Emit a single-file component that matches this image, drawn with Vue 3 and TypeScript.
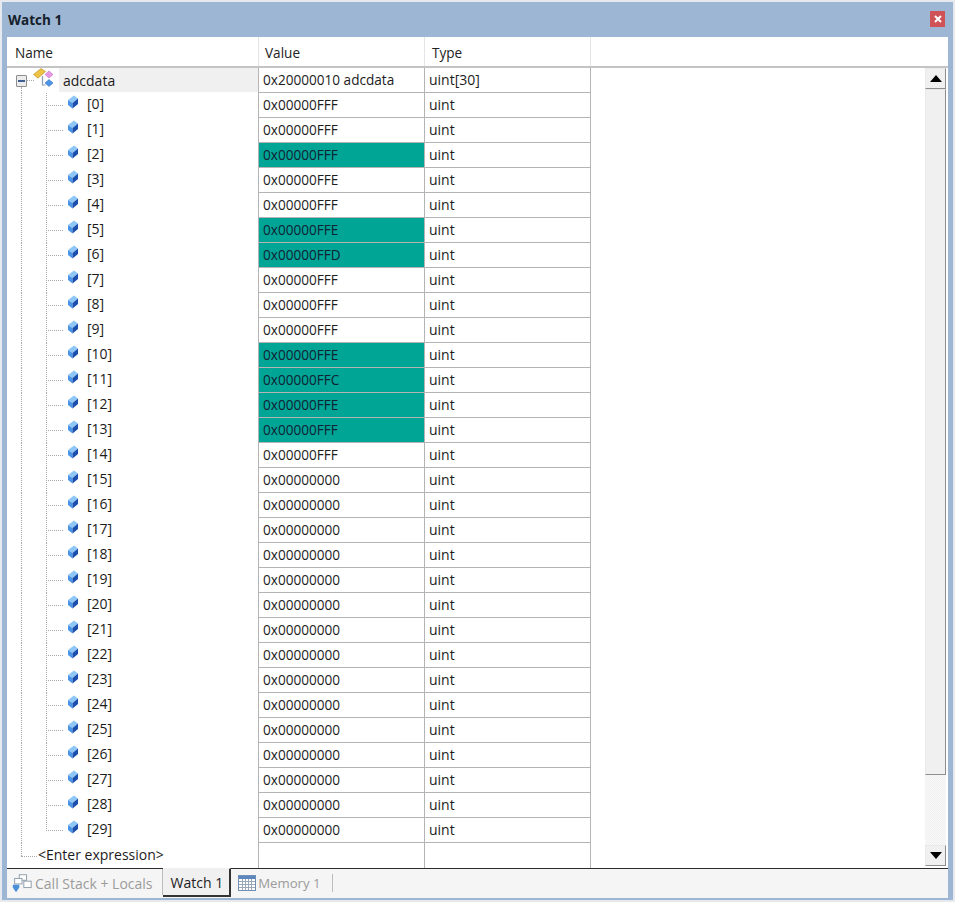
<script setup lang="ts">
interface Row { label: string; value: string; changed: boolean; last: boolean }
const source: [string, boolean][] = [
  ['0x00000FFF', false], ['0x00000FFF', false], ['0x00000FFF', true], ['0x00000FFE', false],
  ['0x00000FFF', false], ['0x00000FFE', true], ['0x00000FFD', true], ['0x00000FFF', false],
  ['0x00000FFF', false], ['0x00000FFF', false], ['0x00000FFE', true], ['0x00000FFC', true],
  ['0x00000FFE', true], ['0x00000FFF', true], ['0x00000FFF', false],
]
const rows: Row[] = Array.from({ length: 30 }, (_, i) => ({
  label: `[${i}]`,
  value: source[i]?.[0] ?? '0x00000000',
  changed: source[i]?.[1] ?? false,
  last: i === 29,
}))
</script>

<template>
  <div class="window">
    <header class="titlebar">
      <span class="title">Watch 1</span>
      <button class="close" aria-label="Close">
        <svg width="8" height="8" viewBox="0 0 8 8"><path d="M1 1l6 6M7 1L1 7" stroke="#fff" stroke-width="2" /></svg>
      </button>
    </header>

    <main class="panel">
      <div class="grid-head">
        <div class="hcell hname">Name</div>
        <div class="hcell hvalue">Value</div>
        <div class="hcell htype">Type</div>
        <div class="hfill"></div>
      </div>
      <div class="body">
        <div class="table">
          <div class="row">
            <div class="name">
              <span class="guide g1 half-down"></span>
              <span class="expander"><i></i></span>
              <span class="dash d0"></span>
              <svg class="rooticon" width="22" height="20" viewBox="0 0 22 20">
                <path d="M9.500 8v9h3" fill="none" stroke="#8a9db5" stroke-width="1.200" />
                <path d="M0.500 6.500L8 0.500 12.500 3.500 5 10.200z" fill="#eec244" stroke="#b58a1e" stroke-width=".6" />
                <path d="M12 6.500L16 3l4 3.500-4 3.500z" fill="#e69ae6" stroke="#b65fc0" stroke-width=".5" />
                <path d="M12 15l4-3.500 4 3.500-4 3.500z" fill="#4d94e6" stroke="#2a66b8" stroke-width=".5" />
              </svg>
              <span class="rootlabel">adcdata</span>
            </div>
            <div class="value">0x20000010 adcdata</div>
            <div class="type">uint[30]</div>
          </div>

          <div v-for="r in rows" :key="r.label" class="row">
            <div class="name">
              <span class="guide g1"></span>
              <span class="guide g2" :class="{ 'half-up': r.last }"></span>
              <span class="dash d1"></span>
              <svg class="cube" width="12" height="15" viewBox="0 0 12 15">
                <path d="M1 5l6-4.500 4 3L5.500 8z" fill="#8ec6f6" />
                <path d="M1 5l4.500 3v5.500L1 10z" fill="#4a94e6" />
                <path d="M5.500 8L11 3.500V9l-5.500 4.500z" fill="#1a4fae" />
              </svg>
              <span class="label">{{ r.label }}</span>
            </div>
            <div class="value" :class="{ changed: r.changed }">{{ r.value }}</div>
            <div class="type">uint</div>
          </div>

          <div class="row enter">
            <div class="name">
              <span class="guide g1 half-up"></span>
              <span class="dash d2"></span>
              <span class="label-enter">&lt;Enter expression&gt;</span>
            </div>
            <div class="value"></div>
            <div class="type"></div>
          </div>
        </div>

        <div class="scrollbar">
          <button class="sb-btn" aria-label="Scroll up"><svg width="12" height="7" viewBox="0 0 12 7"><path d="M6 0l6 7H0z" fill="#000" /></svg></button>
          <div class="thumb"></div>
          <div class="track"></div>
          <button class="sb-btn" aria-label="Scroll down"><svg width="12" height="7" viewBox="0 0 12 7"><path d="M0 0h12L6 7z" fill="#000" /></svg></button>
        </div>
      </div>
    </main>

    <footer class="tabs">
      <div class="tab">
        <svg width="22" height="22" viewBox="0 0 24 22">
          <rect x="9" y="2" width="8" height="6" fill="#fff" stroke="#8a9aa8" />
          <rect x="4" y="6" width="8" height="6" fill="#fff" stroke="#8a9aa8" />
          <rect x="14" y="9" width="8" height="7" fill="#fff" stroke="#8a9aa8" />
          <path d="M2 13h7v3l-3.500 5L2 16z" fill="#4a8fd8" />
        </svg>
        <span>Call Stack + Locals</span>
      </div>
      <div class="tab active"><span>Watch 1</span></div>
      <div class="tab mem">
        <svg width="18" height="16" viewBox="0 0 18 16">
          <rect x=".5" y=".5" width="17" height="15" fill="#fff" stroke="#6f8fb5" />
          <rect x="1" y="1" width="16" height="3" fill="#5b86c0" />
          <path d="M1 6.500h16M1 9.500h16M1 12.500h16M4.500 4v11M7.500 4v11M10.500 4v11M13.500 4v11" stroke="#9aa8b8" />
        </svg>
        <span>Memory 1</span>
      </div>
      <div class="tab-sep"></div>
    </footer>
  </div>
</template>

<style>
html, body { margin: 0; padding: 0; background: #e9edf2; }
</style>

<style scoped>
.window {
  width: 955px;
  height: 902px;
  box-sizing: border-box;
  padding: 3px 7px 4px 7px;
  display: flex;
  flex-direction: column;
  font-family: "Open Sans", "Noto Sans", sans-serif;
  font-size: 13.6px;
  color: #1c1c1c;
  background: #9db6d3;
  box-shadow: inset 0 0 0 2px #e6e9ee;
}
.titlebar {
  height: 34px;
  flex: none;
  display: flex;
  align-items: center;
  justify-content: space-between;
  padding: 0 1px;
}
.title { font-weight: 700; font-size: 13.5px; color: #15202b; }
.close {
  width: 15px;
  height: 16px;
  margin: 0 2px 2px 0;
  padding: 0;
  border: 0;
  background: #cf5356;
  display: flex;
  align-items: center;
  justify-content: center;
}
.panel {
  flex: 1;
  min-height: 0;
  background: #fff;
  display: flex;
  flex-direction: column;
}
.grid-head {
  height: 31px;
  flex: none;
  display: flex;
  border-bottom: 2px solid #c4c4c4;
  box-sizing: border-box;
}
.hcell {
  padding: 1px 0 0 8px;
  display: flex;
  align-items: center;
  box-sizing: border-box;
  border-right: 1px solid #e4e4e4;
  color: #222;
}
.hname { width: 252px; }
.hvalue { width: 166px; padding-left: 6px; }
.htype { width: 166px; padding-left: 7px; }
.hfill { flex: 1; }

.body { flex: 1; min-height: 0; display: flex; }
.table { width: 917px; flex: none; }
.row { height: 25px; display: flex; }
.name {
  width: 251px;
  flex: none;
  position: relative;
  display: flex;
  align-items: center;
  font-size: 14px;
}
.guide {
  position: absolute;
  top: 0;
  bottom: 0;
  width: 0;
  border-left: 1px dotted #a9a9a9;
}
.g1 { left: 14px; }
.g2 { left: 39px; }
.half-up { bottom: 12px; }
.half-down { top: 19px; }
.dash {
  position: absolute;
  height: 0;
  border-top: 1px dotted #a9a9a9;
}
.d0 { left: 20px; top: 12px; width: 7px; }
.d1 { left: 39px; top: 12px; width: 17px; }
.d2 { left: 14px; top: 13px; width: 16px; }
.expander {
  position: absolute;
  left: 9px;
  top: 7px;
  width: 11px;
  height: 12px;
  box-sizing: border-box;
  border: 1px solid #8d8d8d;
  background: #ececec;
  border-radius: 1px;
}
.expander i {
  position: absolute;
  left: 1px;
  top: 4px;
  width: 7px;
  height: 2px;
  background: #3e5f91;
}
.rooticon { position: absolute; left: 26px; top: 0; }
.rootlabel {
  position: absolute;
  left: 52px;
  right: 0;
  top: 0;
  height: 24px;
  padding-left: 4px;
  background: #f0f0f0;
  line-height: 25px;
}
.cube { position: absolute; left: 60px; top: 2px; }
.label { position: absolute; left: 80px; top: 1px; line-height: 20px; }
.label-enter { position: absolute; left: 31px; top: 2px; line-height: 20px; }
.value, .type {
  width: 166px;
  flex: none;
  box-sizing: border-box;
  border-left: 1px solid #b4b4b4;
  border-bottom: 1px solid #b4b4b4;
  padding-left: 4px;
  line-height: 24px;
  white-space: nowrap;
}
.type { border-right: 1px solid #b4b4b4; width: 167px; font-size: 14px; }
.changed { background: #00a596; color: #123; }
.enter .value, .enter .type { border-bottom: 0; }

.scrollbar {
  width: 21px;
  flex: none;
  margin-left: 1px;
  padding-bottom: 2px;
  box-sizing: border-box;
  display: flex;
  flex-direction: column;
}
.sb-btn {
  height: 21px;
  padding: 0;
  flex: none;
  border: 1px solid #e9e9e9;
  border-right-color: #8e8e8e;
  border-bottom-color: #8e8e8e;
  background: #f0f0f0;
  display: flex;
  align-items: center;
  justify-content: center;
}
.thumb {
  height: 686px;
  flex: none;
  box-sizing: border-box;
  background: #f0f0f0;
  border: 1px solid #e9e9e9;
  border-right-color: #8e8e8e;
  border-bottom-color: #8e8e8e;
}
.track {
  flex: 1;
  background: repeating-conic-gradient(#f9f9f9 0 25%, #f0f0f0 0 50%) 0 0 / 2px 2px;
}

.tabs {
  height: 30px;
  flex: none;
  display: flex;
  align-items: stretch;
  background: #f5f5f5;
  border-top: 1px solid #2b2b2b;
  box-sizing: border-box;
  color: #9b9b9b;
  padding-left: 4px;
  font-size: 14px;
}
.tab {
  display: flex;
  align-items: center;
  gap: 2px;
  height: 24px;
  padding-top: 2px;
  box-sizing: content-box;
  border-right: 1px solid #bdbdbd;
  padding-right: 9px;
}
.tab.active {
  color: #222;
  background: #f0f0f0;
  height: 26px;
  padding: 0 6px 0 8px;
  border-right: 2px solid #333;
  border-bottom: 2px solid #333;
  margin-top: -1px;
  border-top: 1px solid #f0f0f0;
}
.tab.mem { gap: 2px; padding-left: 7px; border-right: 0; font-size: 13.2px; }
.tab-sep { width: 1px; height: 18px; margin: 5px 0 0 2px; background: #bdbdbd; }
</style>
